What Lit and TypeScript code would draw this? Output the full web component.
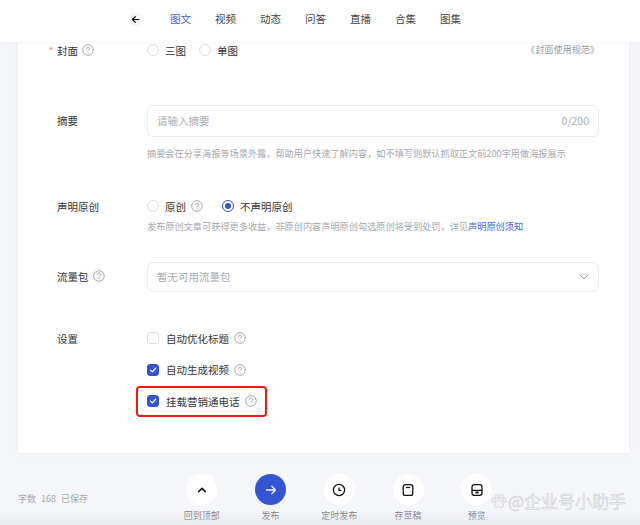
import { LitElement, html, css, svg } from "lit";
import { customElement } from "lit/decorators.js";

const help = html`<svg class="q" viewBox="0 0 12 12"><circle cx="6" cy="6" r="5.3" fill="none" stroke="#8d8f94" stroke-width=".8"/><path d="M4.5 4.7C4.5 3.8 5.2 3.2 6 3.2S7.5 3.8 7.5 4.6C7.5 5.6 6 5.7 6 7" fill="none" stroke="#8d8f94" stroke-width=".8" stroke-linecap="round"/><circle cx="6" cy="8.7" r=".55" fill="#8d8f94"/></svg>`;
const tick = html`<svg viewBox="0 0 12 12" class="tick"><path d="M3 6.2 5.2 8.3 9.2 3.9" fill="none" stroke="#fff" stroke-width="1.5" stroke-linecap="round" stroke-linejoin="round"/></svg>`;

const actions = [
  { label: "回到顶部", icon: svg`<path d="M5.6 10.6 9 7.4l3.4 3.2" fill="none" stroke="#111" stroke-width="1.5" stroke-linecap="round" stroke-linejoin="round"/>` },
  { label: "发布", primary: true, icon: svg`<path d="M4.4 9h9M9.8 5.2 13.5 9l-3.7 3.8" fill="none" stroke="#f3f5ff" stroke-width="1.3" stroke-linecap="round" stroke-linejoin="round"/>` },
  { label: "定时发布", icon: svg`<circle cx="9" cy="9" r="5.6" fill="none" stroke="#111" stroke-width="1.3"/><path d="M9 6.4V9.4H11.4" fill="none" stroke="#111" stroke-width="1.3" stroke-linejoin="round"/>` },
  { label: "存草稿", icon: svg`<rect x="4.2" y="3.6" width="9.6" height="10.8" rx="2.2" fill="none" stroke="#111" stroke-width="1.3"/><path d="M7 6.5h4" stroke="#111" stroke-width="1.3"/>` },
  { label: "预览", icon: svg`<rect x="4" y="3.6" width="10" height="10.8" rx="2.4" fill="none" stroke="#111" stroke-width="1.3"/><path d="M4 9.4h10" stroke="#111" stroke-width="1.3"/><rect x="7.4" y="10.6" width="3.2" height="1.8" fill="#111"/>` },
];

@customElement("app-root")
export class AppRoot extends LitElement {
  static styles = css`
    :host { display: block; width: 640px; height: 525px; overflow: hidden; position: relative; background: #f5f6f9; color: #333; font-family: "Noto Sans CJK SC", "Noto Sans", sans-serif; font-size: 10.5px; }
    svg { display: block; flex: none; }
    nav { height: 42px; box-sizing: border-box; background: #fff; box-shadow: 0 1px 2px rgba(30,40,70,.04); display: flex; align-items: center; padding: 0 0 4px 128px; position: relative; z-index: 1; }
    .back { width: 14px; height: 14px; border-radius: 50%; background: #f4f5f7; display: flex; align-items: center; justify-content: center; margin-right: 28px; }
    .tabs { display: flex; gap: 24px; }
    .tabs span { line-height: 16px; color: #444; }
    .tabs .on { color: #3f5fdc; }
    .card { margin: 0 11px 0 18px; height: 411px; box-sizing: border-box; background: #fff; box-shadow: 0 1px 5px rgba(30,40,70,.05); padding: 0 30px 0 39px; }
    .row { display: grid; grid-template-columns: 90px 1fr; }
    .label { display: flex; align-items: center; gap: 4px; height: 16px; position: relative; }
    .req { position: absolute; left: -8px; color: #f47a7a; font-size: 9px; }
    .inline { display: flex; align-items: center; height: 16px; }
    .cover { justify-content: flex-start; }
    .link-right { margin-left: auto; margin-top: -3px; color: #9b9da3; font-size: 9.15px; }
    .radio { width: 12px; height: 12px; box-sizing: border-box; border-radius: 50%; border: 1px solid #dcdee3; margin-right: 6px; flex: none; }
    .radio.on { border-color: #3554d1; position: relative; }
    .radio.on::after { content: ""; position: absolute; inset: 2px; border-radius: 50%; background: #3554d1; }
    .opt { margin-right: 13px; }
    .q { width: 12px; height: 12px; }
    .opt-q { display: flex; align-items: center; gap: 5px; margin-right: 19px; }
    .field { border: 1px solid #eceef6; border-radius: 6px; display: flex; align-items: center; justify-content: space-between; box-sizing: border-box; padding: 0 11px 1px 9px; color: #a9abb0; }
    .summary-row { margin-top: 47px; }
    .summary-row .field { height: 32px; }
    .summary-row .label { margin-top: 7px; }
    .hint { font-size: 9.18px; line-height: 12px; color: #a6a8ad; }
    .hint a { color: #3f5fdc; text-decoration: none; }
    .count { margin-right: -2px; }
    .sum-hint { margin-top: 10px; }
    .decl-row { margin-top: 39px; }
    .decl-hint { margin-top: 6px; }
    .traffic-row { margin-top: 30px; }
    .traffic-row .field { height: 30px; padding-right: 9px; }
    .traffic-row .label { margin-top: 6px; }
    .set-row { margin-top: 38px; }
    .checks { display: flex; flex-direction: column; gap: 15.5px; }
    .check { display: flex; align-items: center; height: 16px; position: relative; }
    .box { width: 12px; height: 12px; box-sizing: border-box; border: 1px solid #dcdee3; border-radius: 3px; margin-right: 7px; flex: none; }
    .box.on { background: #3554d1; border-color: #3554d1; }
    .tick { width: 10px; height: 10px; }
    .check .q { margin-left: 5px; }
    .check.mark::after { content: ""; position: absolute; left: -11.5px; top: -7.5px; width: 131px; height: 31.5px; box-sizing: border-box; border: 2px solid #f0190e; border-radius: 4px; }
    .bar { height: 72px; display: flex; position: relative; padding: 21px 0 0 18px; box-sizing: border-box; }
    .stat { width: 149.5px; flex: none; font-size: 9px; color: #a6a8ad; line-height: 12px; margin-top: 19px; word-spacing: 3px; }
    .acts { display: flex; }
    .act { width: 68.75px; display: flex; flex-direction: column; align-items: center; gap: 4px; font-size: 9px; line-height: 14px; color: #77797e; }
    .dot { width: 31px; height: 31px; border-radius: 50%; background: #fff; display: flex; align-items: center; justify-content: center; }
    .dot.primary { background: #3355d4; }
    .dot svg { width: 18px; height: 18px; }
    .fade { position: absolute; left: 0; right: 0; bottom: 0; height: 14px; background: linear-gradient(to bottom, rgba(225,226,230,0), rgba(225,226,230,.55)); pointer-events: none; }
    .mark-w { position: absolute; left: 491px; top: 492px; display: flex; align-items: center; gap: 1px; color: rgba(245,246,249,.9); font-size: 17px; line-height: 18px; -webkit-text-stroke: .5px #c6c8cd; }
    .mark-w svg { width: 16px; height: 16px; }
  `;

  render() {
    return html`
      <nav>
        <div class="back"><svg width="9" height="9" viewBox="0 0 9 9"><path d="M8 4.5H1.6M4.3 1.7 1.4 4.5l2.9 2.8" fill="none" stroke="#111" stroke-width="1.2" stroke-linecap="round" stroke-linejoin="round"/></svg></div>
        <div class="tabs">
          <span class="on">图文</span><span>视频</span><span>动态</span><span>问答</span><span>直播</span><span>合集</span><span>图集</span>
        </div>
      </nav>
      <section class="card">
        <div class="row">
          <div class="label"><span class="req">*</span>封面 ${help}</div>
          <div class="inline cover">
            <span class="radio"></span><span class="opt">三图</span>
            <span class="radio"></span><span>单图</span>
            <span class="link-right">《封面使用规范》</span>
          </div>
        </div>
        <div class="row summary-row">
          <div class="label">摘要</div>
          <div>
            <div class="field"><span>请输入摘要</span><span class="count">0/200</span></div>
            <div class="hint sum-hint">摘要会在分享海报等场景外露，帮助用户快速了解内容，如不填写则默认抓取正文前200字用做海报展示</div>
          </div>
        </div>
        <div class="row decl-row">
          <div class="label">声明原创</div>
          <div>
            <div class="inline">
              <span class="radio"></span><span class="opt-q">原创 ${help}</span>
              <span class="radio on"></span><span>不声明原创</span>
            </div>
            <div class="hint decl-hint">发布原创文章可获得更多收益，非原创内容声明原创勾选原创将受到处罚，详见<a>声明原创须知</a></div>
          </div>
        </div>
        <div class="row traffic-row">
          <div class="label">流量包 ${help}</div>
          <div class="field"><span>暂无可用流量包</span>
            <svg width="10" height="10" viewBox="0 0 10 10"><path d="M1 3 5 7l4-4" fill="none" stroke="#8d8f94" stroke-width="1"/></svg>
          </div>
        </div>
        <div class="row set-row">
          <div class="label">设置</div>
          <div class="checks">
            <div class="check"><span class="box"></span>自动优化标题 ${help}</div>
            <div class="check"><span class="box on">${tick}</span>自动生成视频 ${help}</div>
            <div class="check mark"><span class="box on">${tick}</span>挂载营销通电话 ${help}</div>
          </div>
        </div>
      </section>
      <footer class="bar">
        <div class="stat">字数 168 已保存</div>
        <div class="acts">
          ${actions.map((a) => html`<div class="act"><div class="dot ${a.primary ? "primary" : ""}"><svg viewBox="0 0 18 18">${a.icon}</svg></div><span>${a.label}</span></div>`)}
        </div>
        <div class="fade"></div>
      </footer>
      <div class="mark-w">
        <svg viewBox="0 0 16 16"><g fill="#f1f2f5" stroke="#c6c8cd" stroke-width=".7"><ellipse cx="2.6" cy="7" rx="1.7" ry="2.1"/><ellipse cx="6" cy="3.6" rx="1.7" ry="2.2"/><ellipse cx="10.4" cy="3.6" rx="1.7" ry="2.2"/><ellipse cx="13.6" cy="7" rx="1.7" ry="2.1"/><path d="M8 7C5.8 7 3.6 10 3.6 12.4 3.6 14.4 6 14.6 8 13.8 10 14.6 12.6 14.4 12.6 12.4 12.6 10 10.2 7 8 7Z"/></g></svg>
        <span>@企业号小助手</span>
      </div>
    `;
  }
}
